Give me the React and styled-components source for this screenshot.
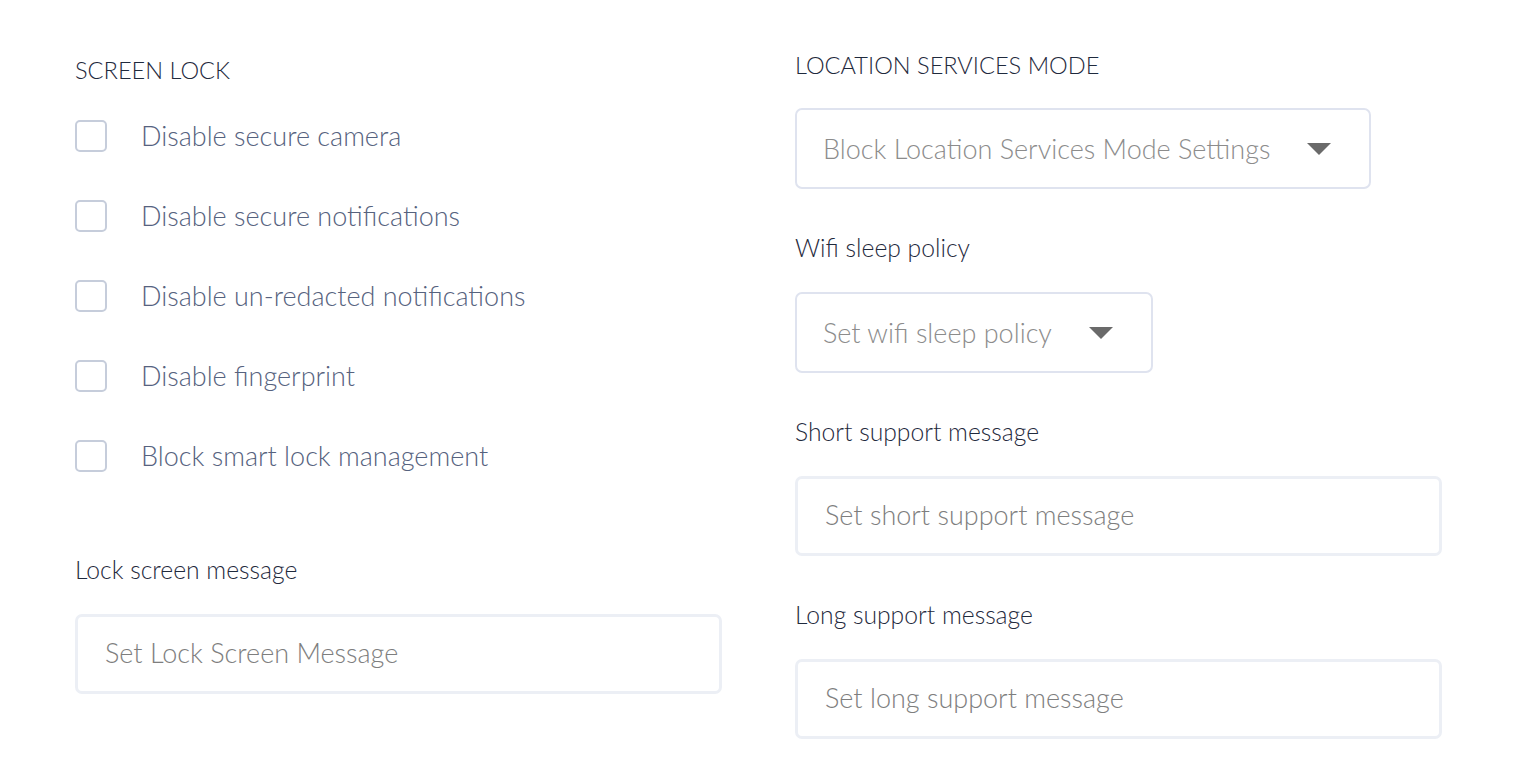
import React from "react";
import styled, { createGlobalStyle } from "styled-components";

const Global = createGlobalStyle`
  html, body { margin: 0; padding: 0; background: #ffffff; }
  body { font-family: Lato, "Open Sans", "Noto Sans", sans-serif; }
  * { box-sizing: border-box; }
`;

const Page = styled.div`
  display: grid;
  grid-template-columns: 647px 647px;
  column-gap: 73px;
  padding: 0 0 0 75px;
  width: 1516px;
  height: 762px;
  overflow: hidden;
`;

const Column = styled.div`
  display: flex;
  flex-direction: column;
  align-items: flex-start;
  padding-top: ${(p) => p.$top}px;
`;

const SectionTitle = styled.div`
  font-size: 23.6px;
  font-weight: 300;
  line-height: 30px;
  color: #1f2a3d;
  text-transform: uppercase;
  margin-bottom: ${(p) => p.$gap}px;
`;

const CheckList = styled.div`
  display: flex;
  flex-direction: column;
  width: 100%;
`;

const CheckRow = styled.label`
  display: flex;
  align-items: center;
  height: ${(p) => p.$h}px;
  gap: 34px;
  cursor: pointer;
`;

const Box = styled.span`
  width: 32px;
  height: 32px;
  border: 2px solid #c6cddb;
  border-radius: 5px;
  background: #fff;
  flex: none;
`;

const CheckText = styled.span`
  font-size: 27px;
  font-weight: 300;
  line-height: 32px;
  color: #56627e;
  margin-top: -1px;
`;

const Field = styled.div`
  display: flex;
  flex-direction: column;
  align-items: flex-start;
  width: 100%;
  margin-top: ${(p) => p.$top}px;
`;

const FieldLabel = styled.div`
  font-size: 24.7px;
  font-weight: 300;
  line-height: 30px;
  color: #1f2a3d;
  margin-bottom: 29px;
`;

const TextBox = styled.div`
  width: 100%;
  height: 80px;
  border: 3px solid #eceff5;
  border-radius: 7px;
  display: flex;
  align-items: center;
  padding: 0 0 3px 27px;
  font-size: 27px;
  font-weight: 300;
  color: #7e7e7e;
`;

const Select = styled.div`
  display: inline-flex;
  align-items: center;
  height: 81px;
  border: 2px solid #dfe3ef;
  border-radius: 7px;
  padding: 0 38px 0 26px;
  gap: 37px;
  font-size: 27px;
  font-weight: 300;
  color: #8c8c8c;
`;

const Caret = styled.svg`
  width: 24px;
  height: 12px;
  flex: none;
`;

const Arrow = () => (
  <Caret viewBox="0 0 24 12">
    <path d="M0 0 H24 L12 12 Z" fill="#6a6a6a" />
  </Caret>
);

const checks = [
  "Disable secure camera",
  "Disable secure notifications",
  "Disable un-redacted notifications",
  "Disable fingerprint",
  "Block smart lock management",
];

export default function App() {
  return (
    <>
      <Global />
      <Page>
        <Column $top={55}>
          <SectionTitle $gap={11}>Screen lock</SectionTitle>
          <CheckList>
            {checks.map((c) => (
              <CheckRow key={c} $h={80}>
                <Box />
                <CheckText>{c}</CheckText>
              </CheckRow>
            ))}
          </CheckList>
          <Field $top={59}>
            <FieldLabel>Lock screen message</FieldLabel>
            <TextBox>Set Lock Screen Message</TextBox>
          </Field>
        </Column>
        <Column $top={50}>
          <SectionTitle $gap={28}>Location services mode</SectionTitle>
          <Select>
            Block Location Services Mode Settings
            <Arrow />
          </Select>
          <Field $top={44}>
            <FieldLabel>Wifi sleep policy</FieldLabel>
            <Select>
              Set wifi sleep policy
              <Arrow />
            </Select>
          </Field>
          <Field $top={44}>
            <FieldLabel>Short support message</FieldLabel>
            <TextBox>Set short support message</TextBox>
          </Field>
          <Field $top={44}>
            <FieldLabel>Long support message</FieldLabel>
            <TextBox>Set long support message</TextBox>
          </Field>
        </Column>
      </Page>
    </>
  );
}
